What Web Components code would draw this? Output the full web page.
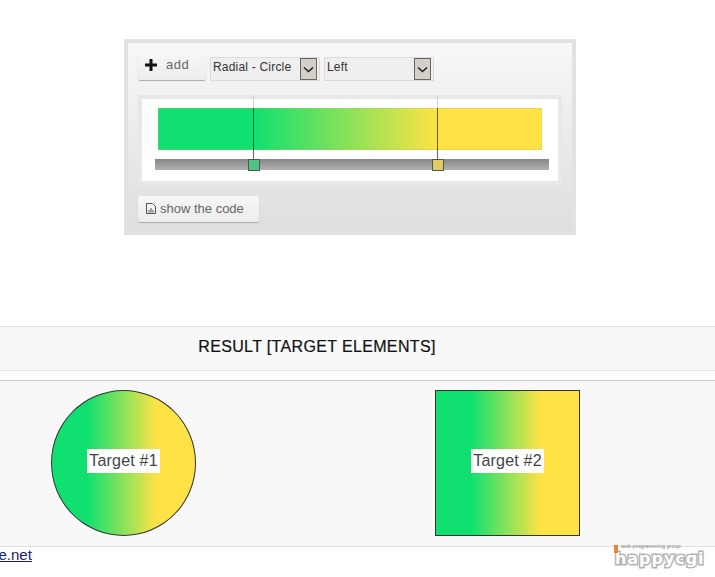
<!DOCTYPE html>
<html><head><meta charset="utf-8"><style>
html,body{margin:0;padding:0;background:#fff;overflow:hidden}
body{width:715px;height:577px;font-family:"Liberation Sans",sans-serif;color:#333}
</style></head><body>
<gradient-app></gradient-app>
<script>
const def=(name,css,html)=>{customElements.define(name,class extends HTMLElement{constructor(){super();this.attachShadow({mode:'open'}).innerHTML=`<style>${css}</style>${html}`}})};
const GRAD='linear-gradient(90deg,#10e070 25%,#ffe346 73%)';
def('ui-button',`:host{display:inline-flex;align-items:center;box-sizing:border-box;height:27px;background:linear-gradient(#f7f7f7,#ececec);border-radius:3px;box-shadow:0 1px 1px #aaa;font-size:13px;color:#666}`,`<slot></slot>`);
def('ui-select',`:host{display:flex;box-sizing:border-box;height:24px;background:#efefef;border:1px solid #dcdcdc;font:12px "Liberation Sans",sans-serif;color:#333;align-items:center;justify-content:space-between;padding:0 2px 0 2px;letter-spacing:.2px}
.t{margin-top:-5px}
.arrow{box-sizing:border-box;width:17px;height:22px;background:#d4d0c8;border:1px solid #666;display:flex;align-items:center;justify-content:center}`,
`<span class="t"><slot></slot></span><span class="arrow"><svg width="11" height="7" viewBox="0 0 11 7"><path d="M1 1.500l4.500 4 4.500-4" fill="none" stroke="#222" stroke-width="1.6"/></svg></span>`);
def('gradient-stop',`:host{position:absolute;top:-2px;width:12px;height:74px;display:flex;flex-direction:column;align-items:flex-start;left:var(--x)}
.line{flex:1;width:1px;margin-left:5px;background:linear-gradient(rgba(0,0,0,.17) 0 11px,rgba(0,0,0,.6) 11px)}
.h{box-sizing:border-box;width:12px;height:12px;border:1px solid #555;background:var(--c)}`,`<div class="line"></div><div class="h"></div>`);
def('gradient-editor',`:host{display:block;position:relative;box-sizing:border-box;width:424px;height:90px;margin-top:14px;border:4px solid #e8e8e8;background:#fff;padding:9px 16px 0 16px}
.bar{box-sizing:border-box;width:384px;height:42px;background:${GRAD} border-box;border:1px solid rgba(190,190,120,.3)}
.track{margin:9px 0 0 -3px;width:394px;height:11px;background:linear-gradient(#868686,#b0b0b0)}`,
`<div class="bar"></div><div class="track"></div><gradient-stop style="--x:106px;--c:#4cc482"></gradient-stop><gradient-stop style="--x:290px;--c:#dfcc62"></gradient-stop>`);
def('gradient-panel',`:host{display:block;box-sizing:border-box;width:452px;height:196px;margin:39px 0 0 124px;border:4px solid #e2e2e2;background:linear-gradient(#f8f8f8,#dedede);padding:10px 10px 0}
.top{display:flex;align-items:flex-start;gap:4px}
ui-select{margin-top:4px}
.add{width:68px;padding:0 0 4px 7px}
.add span{margin-left:9px;letter-spacing:.5px}
.code{width:121px;height:26px;margin-top:11px;padding:0 0 2px 8px;gap:4px}`,
`<div class="top"><ui-button class="add"><svg width="12" height="12" viewBox="0 0 12 12" style="flex:none"><path d="M6 0v12M0 6h12" stroke="#111" stroke-width="3"/></svg><span>add</span></ui-button>
<ui-select style="width:110px">Radial - Circle</ui-select><ui-select style="width:110px">Left</ui-select></div>
<gradient-editor></gradient-editor>
<ui-button class="code"><svg width="10" height="11" viewBox="0 0 10 11" style="flex:none"><path d="M.5.500h6l3 3v7h-9zM3 9.500V7M5 9.500V5M7 9.500V7" fill="none" stroke="#555"/></svg><span>show the code</span></ui-button>`);
def('section-title',`:host{display:block;box-sizing:border-box;height:45px;margin-top:91px;background:#f8f8f8;border-top:1px solid #e4e4e4;border-bottom:1px solid #e4e4e4;font:16px "Liberation Sans",sans-serif;color:#111;text-align:center;line-height:40px;letter-spacing:.35px;padding-right:81px;-webkit-text-stroke:.2px #111}`,`<slot></slot>`);
def('target-shape',`:host{display:flex;box-sizing:border-box;width:145px;height:146px;align-items:center;justify-content:center;border:1px solid #333;background:${GRAD} border-box;padding-bottom:4px}
:host([round]){border-radius:50%}
span{background:#fff;padding:2px 2px;font:16px/20px "Liberation Sans",sans-serif;color:#444;letter-spacing:.2px}`,`<span><slot></slot></span>`);
def('result-area',`:host{display:flex;box-sizing:border-box;height:167px;margin-top:9px;background:#f8f8f8;border-top:1px solid #ccc;border-bottom:1px solid #ddd;padding:9px 135px 0 51px;justify-content:space-between}`,`<slot></slot>`);
def('hc-logo',`:host{display:block;position:relative;width:92px;height:24px;margin-right:9px;margin-top:-2px}
.o{position:absolute;left:0;top:0;width:4px;height:8px;background:#e8843c}
.s{position:absolute;left:7px;top:-2px;font:5.500px/6px "Liberation Sans",sans-serif;color:#888;white-space:nowrap}
.m{position:absolute;left:1px;top:5px;font:bold 16px/18px "DejaVu Sans",sans-serif;color:#fff;-webkit-text-stroke:3px #b4b4b4;paint-order:stroke fill;letter-spacing:.95px;white-space:nowrap}`,
`<div class="m">happycgi</div><div class="o"></div><div class="s">web programming group</div>`);
def('page-footer',`:host{display:flex;justify-content:space-between;align-items:flex-start;height:31px}
a{font:15px/16px "Liberation Sans",sans-serif;color:#1a1a6e;text-decoration:underline;margin-left:-1.500px}`,`<a href="#">e.net</a><hc-logo></hc-logo>`);
def('gradient-app',`:host{display:block;width:715px;overflow:hidden}`,
`<gradient-panel></gradient-panel><section-title>RESULT [TARGET ELEMENTS]</section-title><result-area><target-shape round>Target #1</target-shape><target-shape>Target #2</target-shape></result-area><page-footer></page-footer>`);
</script></body></html>
